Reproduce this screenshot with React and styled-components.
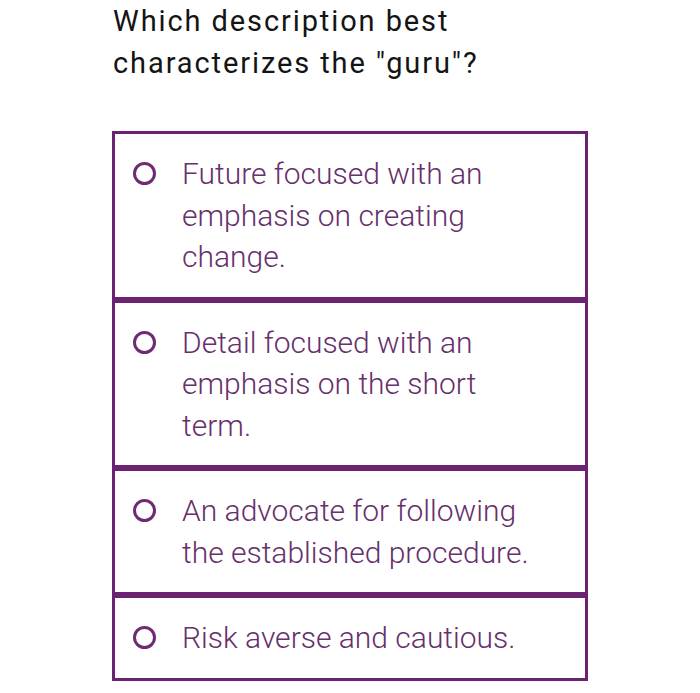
import React from "react";
import styled, { createGlobalStyle } from "styled-components";

const GlobalStyle = createGlobalStyle`
  body {
    margin: 0;
    background: #ffffff;
    font-family: Roboto, "Noto Sans", sans-serif;
  }
`;

const Page = styled.div`
  width: 700px;
  padding-left: 112px;
  box-sizing: border-box;
`;

const Question = styled.h1`
  margin: 0;
  width: 420px;
  font-family: Roboto, sans-serif;
  font-weight: 400;
  font-size: 29px;
  line-height: 42px;
  letter-spacing: 1.9px;
  color: #141414;
  padding-left: 1px;
`;

const Options = styled.div`
  margin-top: 47px;
  width: 476px;
  display: flex;
  flex-direction: column;
`;

const Option = styled.label`
  display: flex;
  align-items: flex-start;
  border: 3px solid #6b2371;
  padding: 19px 20px 19px 18px;
  cursor: pointer;
`;

const Radio = styled.span`
  flex: 0 0 auto;
  width: 23px;
  height: 23px;
  box-sizing: border-box;
  border: 3.5px solid #6e2b73;
  border-radius: 50%;
  margin-top: 9px;
`;

const Text = styled.span`
  margin-left: 26px;
  max-width: 356px;
  font-family: Roboto, sans-serif;
  font-weight: 300;
  font-size: 30px;
  line-height: 41.5px;
  color: #66306b;
`;

const answers = [
  "Future focused with an emphasis on creating change.",
  "Detail focused with an emphasis on the short term.",
  "An advocate for following the established procedure.",
  "Risk averse and cautious.",
];

export default function App() {
  return (
    <>
      <GlobalStyle />
      <Page>
        <Question>Which description best characterizes the "guru"?</Question>
        <Options>
          {answers.map((a) => (
            <Option key={a}>
              <Radio />
              <Text>{a}</Text>
            </Option>
          ))}
        </Options>
      </Page>
    </>
  );
}
